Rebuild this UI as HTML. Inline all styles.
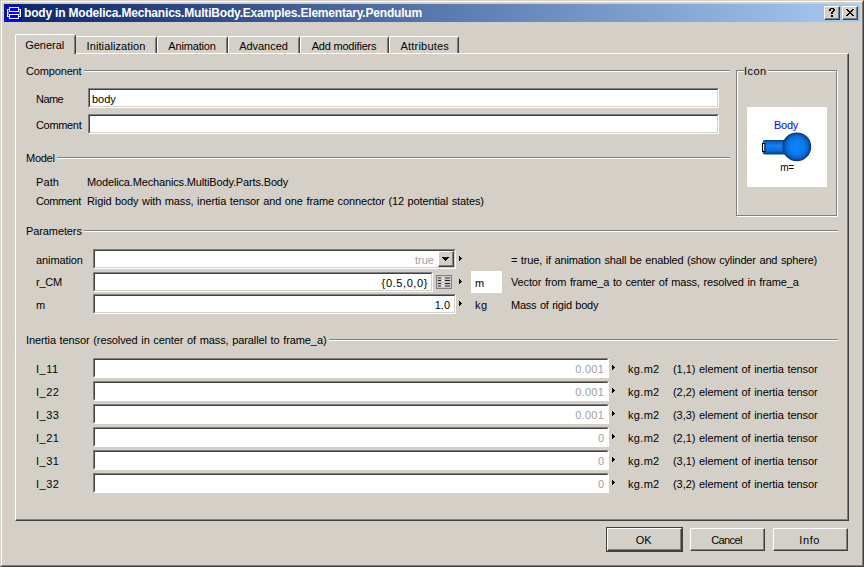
<!DOCTYPE html>
<html>
<head>
<meta charset="utf-8">
<title>body</title>
<style>
*{box-sizing:border-box;margin:0;padding:0}
html,body{width:864px;height:567px;overflow:hidden;background:#d4d0c8}
body{font-family:"Liberation Sans",sans-serif;font-size:11px;color:#000;position:relative}
.abs{position:absolute}
.t{position:absolute;white-space:nowrap;line-height:13px;height:13px}
#win{position:absolute;left:0;top:0;width:864px;height:567px;background:#d4d0c8;
 border-top:1px solid #d4d0c8;border-left:1px solid #d4d0c8;border-right:1px solid #404040;border-bottom:1px solid #404040}
#win2{position:absolute;left:1px;top:1px;width:862px;height:565px;
 border-top:1px solid #fff;border-left:1px solid #fff;border-right:1px solid #808080;border-bottom:1px solid #808080}
#title{position:absolute;left:4px;top:4px;width:856px;height:18px;background:linear-gradient(to right,#0a246a 0%,#a6caf0 100%)}
#ticon{position:absolute;left:6px;top:5px;width:16px;height:16px;background:#0000ff}
#ttext{position:absolute;left:24px;top:6px;color:#fff;font-weight:bold;font-size:12px;letter-spacing:-0.19px;line-height:14px;white-space:nowrap}
.tbtn{position:absolute;top:6px;width:16px;height:14px;background:#d4d0c8;
 border-top:1px solid #fff;border-left:1px solid #fff;border-right:1px solid #404040;border-bottom:1px solid #404040}
.tbtn i{position:absolute;left:0;top:0;width:14px;height:12px;border-right:1px solid #808080;border-bottom:1px solid #808080;display:block}
#pane{position:absolute;left:15px;top:53px;width:834px;height:468px;
 border-top:1px solid #fff;border-left:1px solid #fff;border-right:1px solid #404040;border-bottom:1px solid #404040}
#pane i{position:absolute;left:0;top:0;right:0;bottom:0;border-right:1px solid #808080;border-bottom:1px solid #808080;display:block}
.tab{position:absolute;top:36px;height:17px;background:#d4d0c8;
 border-top:1px solid #fff;border-left:1px solid #fff;border-right:1px solid #404040;border-radius:2px 2px 0 0}
.tab i{position:absolute;top:1px;bottom:0;right:0;width:1px;background:#808080;display:block}
.tab span{position:absolute;left:0;right:0;top:3px;text-align:center;line-height:13px;white-space:nowrap}
#tab0{top:34px;height:20px;left:15px;width:61px}
#tab0 span{top:4px}
.tab.nl{border-left:none;border-radius:0 2px 0 0}
.ed{position:absolute;background:#fff;border-top:1px solid #808080;border-left:1px solid #808080;border-right:1px solid #fff;border-bottom:1px solid #fff}
.ed i{position:absolute;left:0;top:0;right:0;bottom:0;border-top:1px solid #404040;border-left:1px solid #404040;border-right:1px solid #d4d0c8;border-bottom:1px solid #d4d0c8;display:block}
.ed.ro i{border-right-color:#fff;border-bottom-color:#fff}
.ed span{position:absolute;right:5px;top:4px;line-height:13px;white-space:nowrap}
.g{color:#a0a0a4}
.hl{position:absolute;height:2px;border-top:1px solid #808080;border-bottom:1px solid #fff}
.btn{position:absolute;height:23px;width:75px;background:#d4d0c8;
 border-top:1px solid #fff;border-left:1px solid #fff;border-right:1px solid #404040;border-bottom:1px solid #404040}
.btn i{position:absolute;left:0;top:0;right:0;bottom:0;border-right:1px solid #808080;border-bottom:1px solid #808080;display:block}
.btn span{position:absolute;left:0;right:0;top:5px;text-align:center;line-height:13px}
</style>
</head>
<body>
<div id="win"></div><div id="win2"></div>
<div id="title"></div>
<div id="ticon">
<svg width="16" height="16" viewBox="0 0 16 16" style="display:block" shape-rendering="crispEdges">
<g fill="#fff">
<rect x="3" y="2" width="10" height="1"/><rect x="3" y="6" width="10" height="1"/><rect x="3" y="2" width="1" height="5"/><rect x="12" y="2" width="1" height="5"/>
<rect x="3" y="9" width="10" height="1"/><rect x="3" y="13" width="10" height="1"/><rect x="3" y="9" width="1" height="5"/><rect x="12" y="9" width="1" height="5"/>
<rect x="1" y="4" width="1" height="8"/><rect x="14" y="4" width="1" height="8"/>
<rect x="1" y="4" width="3" height="1"/><rect x="12" y="4" width="3" height="1"/>
<rect x="1" y="11" width="3" height="1"/><rect x="12" y="11" width="3" height="1"/>
<rect x="2" y="6" width="1" height="4" opacity="0.45"/><rect x="13" y="6" width="1" height="4" opacity="0.45"/>
</g>
</svg>
</div>
<div id="ttext">body in Modelica.Mechanics.MultiBody.Examples.Elementary.Pendulum</div>

<div class="tbtn" style="left:824px"><i></i><svg class="abs" style="left:-1px;top:-1px" width="16" height="14" shape-rendering="crispEdges"><g fill="#000"><rect x="6" y="2" width="4" height="1"/><rect x="5" y="3" width="2" height="1"/><rect x="9" y="3" width="2" height="1"/><rect x="5" y="4" width="2" height="1"/><rect x="9" y="4" width="2" height="1"/><rect x="8" y="5" width="2" height="1"/><rect x="7" y="6" width="2" height="1"/><rect x="7" y="7" width="2" height="1"/><rect x="7" y="9" width="2" height="1"/><rect x="7" y="10" width="2" height="1"/></g></svg></div>
<div class="tbtn" style="left:842px"><i></i><svg class="abs" style="left:-1px;top:-1px" width="16" height="14" shape-rendering="crispEdges"><g fill="#000"><rect x="4" y="3" width="2" height="1"/><rect x="10" y="3" width="2" height="1"/><rect x="5" y="4" width="2" height="1"/><rect x="9" y="4" width="2" height="1"/><rect x="6" y="5" width="4" height="1"/><rect x="7" y="6" width="2" height="1"/><rect x="6" y="7" width="4" height="1"/><rect x="5" y="8" width="2" height="1"/><rect x="9" y="8" width="2" height="1"/><rect x="4" y="9" width="2" height="1"/><rect x="10" y="9" width="2" height="1"/></g></svg></div>
<div id="pane"><i></i></div>
<div class="tab" id="tab0"><i></i><span style="left:-0.8px;right:0.8px;letter-spacing:0.002px;">General</span></div>
<div class="tab nl" style="left:76px;width:81px"><i></i><span style="letter-spacing:0.108px;">Initialization</span></div>
<div class="tab" style="left:157px;width:71px"><i></i><span style="left:-0.5px;right:0.5px;letter-spacing:-0.158px;">Animation</span></div>
<div class="tab" style="left:228px;width:72px"><i></i><span style="left:-0.5px;right:0.5px;letter-spacing:-0.024px;">Advanced</span></div>
<div class="tab" style="left:300px;width:89px"><i></i><span style="left:-0.5px;right:0.5px;letter-spacing:-0.196px;">Add modifiers</span></div>
<div class="tab" style="left:389px;width:70px"><i></i><span style="left:0.8px;right:-0.8px;letter-spacing:0.208px;">Attributes</span></div>
<div class="t" style="left:26px;top:65px;letter-spacing:-0.156px;">Component</div>
<div class="hl" style="left:84px;top:70px;width:646px"></div>
<div class="t" style="left:36px;top:93px;letter-spacing:-0.535px;">Name</div>
<div class="ed" style="left:88px;top:88px;width:631px;height:20px"><i></i><span class="" style="left:3px;right:auto;">body</span></div>
<div class="t" style="left:36px;top:119px;letter-spacing:-0.331px;">Comment</div>
<div class="ed" style="left:88px;top:114px;width:631px;height:20px"><i></i></div>
<div class="t" style="left:26px;top:152px;letter-spacing:-0.283px;">Model</div>
<div class="hl" style="left:57px;top:157px;width:673px"></div>
<div class="t" style="left:36px;top:176px;letter-spacing:0.100px;">Path</div>
<div class="t" style="left:87px;top:176px;letter-spacing:-0.151px;">Modelica.Mechanics.MultiBody.Parts.Body</div>
<div class="t" style="left:36px;top:195px;letter-spacing:-0.405px;">Comment</div>
<div class="t" style="left:87px;top:195px;letter-spacing:-0.125px;word-spacing:0.700px;">Rigid body with mass, inertia tensor and one frame connector (12 potential states)</div>
<div class="abs" style="left:736px;top:70px;width:101px;height:146px;border:1px solid #808080;box-shadow:1px 1px 0 #fff, inset 1px 1px 0 #fff"></div>
<div class="abs" style="left:744px;top:70px;width:24px;height:2px;background:#d4d0c8"></div>
<div class="t" style="left:744px;top:65px;letter-spacing:0.479px;">Icon</div>
<div class="abs" style="left:747px;top:107px;width:80px;height:80px;background:#fff">
<svg width="80" height="80" viewBox="0 0 80 80" style="display:block">
<defs>
<radialGradient id="sg" cx="0.5" cy="0.5" r="0.5"><stop offset="0" stop-color="#0a84fc"/><stop offset="0.5" stop-color="#0b7cf0"/><stop offset="0.78" stop-color="#0a64cc"/><stop offset="0.92" stop-color="#08489a"/><stop offset="1" stop-color="#052c64"/></radialGradient>
<linearGradient id="cg" x1="0" y1="0" x2="0" y2="1"><stop offset="0" stop-color="#083c80"/><stop offset="0.15" stop-color="#0c62c4"/><stop offset="0.4" stop-color="#0e86f6"/><stop offset="0.7" stop-color="#0c70de"/><stop offset="1" stop-color="#083c80"/></linearGradient>
</defs>
<path d="M18 33h26v14.5h-26a2.3 2.3 0 0 1 -2.3 -2.3v-9.9a2.3 2.3 0 0 1 2.3 -2.3z" fill="url(#cg)"/>
<rect x="15.5" y="36.5" width="2.4" height="8" fill="#e0e0e0" stroke="#000" stroke-width="1"/>
<circle cx="49.8" cy="39.8" r="14.4" fill="url(#sg)"/>
</svg>
<div class="t" style="left:-1px;width:80px;text-align:center;top:12px;color:#0000ff;font-size:11px;letter-spacing:-0.25px">Body</div>
<div class="t" style="left:0;width:80px;text-align:center;top:54px;font-size:10px;letter-spacing:-0.3px">m=</div>
</div>
<div class="t" style="left:26px;top:225px;letter-spacing:-0.102px;">Parameters</div>
<div class="hl" style="left:84px;top:230px;width:754px"></div>
<div class="t" style="left:36px;top:254px;letter-spacing:-0.089px;">animation</div>
<div class="ed" style="left:93px;top:249px;width:363px;height:20px"><i></i><span class="g" style="right:21px">true</span>
<div class="abs" style="right:1px;top:1px;width:16px;height:16px;background:#d4d0c8;border-top:1px solid #fff;border-left:1px solid #fff;border-right:1px solid #404040;border-bottom:1px solid #404040"><div class="abs" style="left:0;top:0;right:0;bottom:0;border-right:1px solid #808080;border-bottom:1px solid #808080"></div>
<svg class="abs" style="left:3px;top:5px" width="7" height="4" shape-rendering="crispEdges"><path d="M0 0h7v1h-7zM1 1h5v1h-5zM2 2h3v1h-3zM3 3h1v1h-1z" fill="#000"/></svg></div>
</div>
<svg class="abs" style="left:459px;top:256px" width="3" height="5" shape-rendering="crispEdges"><path d="M0 0h1v5h-1zM1 1h1v3h-1zM2 2h1v1h-1z" fill="#000"/></svg>
<div class="t" style="left:511px;top:254px;letter-spacing:-0.156px;word-spacing:0.700px;">= true, if animation shall be enabled (show cylinder and sphere)</div>
<div class="t" style="left:36px;top:276px;letter-spacing:-0.266px;">r_CM</div>
<div class="ed" style="left:93px;top:272px;width:340px;height:20px"><i></i><span class="" style="letter-spacing:0.600px;right:4px;">{0.5,0,0}</span></div>
<div class="abs" style="left:436px;top:275px;width:16px;height:14px;background:#c8c8c8;border:1px solid #808080">
<svg width="14" height="12" style="display:block" shape-rendering="crispEdges">
<g fill="#f4f4f4"><rect x="5" y="1" width="2" height="2" fill="#e4e4e4"/><rect x="5" y="4" width="2" height="1"/><rect x="5" y="7" width="2" height="1"/><rect x="5" y="9" width="2" height="2" fill="#e4e4e4"/></g>
<g fill="#808080"><rect x="1" y="1" width="3" height="2"/><rect x="8" y="1" width="5" height="2"/><rect x="1" y="9" width="3" height="2"/><rect x="8" y="9" width="5" height="2"/></g>
<g fill="#202020"><rect x="1" y="4" width="3" height="1"/><rect x="8" y="4" width="5" height="1"/><rect x="1" y="7" width="3" height="1"/><rect x="8" y="7" width="5" height="1"/></g>
</svg></div>
<svg class="abs" style="left:459px;top:279px" width="3" height="5" shape-rendering="crispEdges"><path d="M0 0h1v5h-1zM1 1h1v3h-1zM2 2h1v1h-1z" fill="#000"/></svg>
<div class="abs" style="left:471px;top:271px;width:31px;height:22px;background:#fff"></div>
<div class="t" style="left:475px;top:277px;">m</div>
<div class="t" style="left:511px;top:276px;letter-spacing:-0.146px;word-spacing:0.700px;">Vector from frame_a to center of mass, resolved in frame_a</div>
<div class="t" style="left:36px;top:299px;">m</div>
<div class="ed" style="left:93px;top:294px;width:363px;height:20px"><i></i><span class="" style="letter-spacing:-0.027px;right:5px;">1.0</span></div>
<svg class="abs" style="left:459px;top:301px" width="3" height="5" shape-rendering="crispEdges"><path d="M0 0h1v5h-1zM1 1h1v3h-1zM2 2h1v1h-1z" fill="#000"/></svg>
<div class="t" style="left:475px;top:299px;letter-spacing:0.600px;">kg</div>
<div class="t" style="left:511px;top:299px;letter-spacing:-0.228px;word-spacing:0.700px;">Mass of rigid body</div>
<div class="t" style="left:26px;top:334px;letter-spacing:-0.094px;word-spacing:0.700px;">Inertia tensor (resolved in center of mass, parallel to frame_a)</div>
<div class="hl" style="left:329px;top:339px;width:509px"></div>
<div class="t" style="left:36px;top:363px;letter-spacing:0.500px;">I_11</div>
<div class="ed ro" style="left:93px;top:358px;width:516px;height:20px"><i></i><span class="g" style="letter-spacing:0.250px;right:4px;">0.001</span></div>
<svg class="abs" style="left:612px;top:365px" width="3" height="5" shape-rendering="crispEdges"><path d="M0 0h1v5h-1zM1 1h1v3h-1zM2 2h1v1h-1z" fill="#000"/></svg>
<div class="t" style="left:628px;top:363px;letter-spacing:0.318px;">kg.m2</div>
<div class="t" style="left:673px;top:363px;letter-spacing:-0.059px;word-spacing:0.700px;">(1,1) element of inertia tensor</div>
<div class="t" style="left:36px;top:386px;letter-spacing:0.500px;">I_22</div>
<div class="ed ro" style="left:93px;top:381px;width:516px;height:20px"><i></i><span class="g" style="letter-spacing:0.250px;right:4px;">0.001</span></div>
<svg class="abs" style="left:612px;top:388px" width="3" height="5" shape-rendering="crispEdges"><path d="M0 0h1v5h-1zM1 1h1v3h-1zM2 2h1v1h-1z" fill="#000"/></svg>
<div class="t" style="left:628px;top:386px;letter-spacing:0.318px;">kg.m2</div>
<div class="t" style="left:673px;top:386px;letter-spacing:-0.059px;word-spacing:0.700px;">(2,2) element of inertia tensor</div>
<div class="t" style="left:36px;top:409px;letter-spacing:0.500px;">I_33</div>
<div class="ed ro" style="left:93px;top:404px;width:516px;height:20px"><i></i><span class="g" style="letter-spacing:0.250px;right:4px;">0.001</span></div>
<svg class="abs" style="left:612px;top:411px" width="3" height="5" shape-rendering="crispEdges"><path d="M0 0h1v5h-1zM1 1h1v3h-1zM2 2h1v1h-1z" fill="#000"/></svg>
<div class="t" style="left:628px;top:409px;letter-spacing:0.318px;">kg.m2</div>
<div class="t" style="left:673px;top:409px;letter-spacing:-0.059px;word-spacing:0.700px;">(3,3) element of inertia tensor</div>
<div class="t" style="left:36px;top:432px;letter-spacing:0.500px;">I_21</div>
<div class="ed ro" style="left:93px;top:427px;width:516px;height:20px"><i></i><span class="g" style="right:4px;">0</span></div>
<svg class="abs" style="left:612px;top:434px" width="3" height="5" shape-rendering="crispEdges"><path d="M0 0h1v5h-1zM1 1h1v3h-1zM2 2h1v1h-1z" fill="#000"/></svg>
<div class="t" style="left:628px;top:432px;letter-spacing:0.318px;">kg.m2</div>
<div class="t" style="left:673px;top:432px;letter-spacing:-0.059px;word-spacing:0.700px;">(2,1) element of inertia tensor</div>
<div class="t" style="left:36px;top:455px;letter-spacing:0.500px;">I_31</div>
<div class="ed ro" style="left:93px;top:450px;width:516px;height:20px"><i></i><span class="g" style="right:4px;">0</span></div>
<svg class="abs" style="left:612px;top:457px" width="3" height="5" shape-rendering="crispEdges"><path d="M0 0h1v5h-1zM1 1h1v3h-1zM2 2h1v1h-1z" fill="#000"/></svg>
<div class="t" style="left:628px;top:455px;letter-spacing:0.318px;">kg.m2</div>
<div class="t" style="left:673px;top:455px;letter-spacing:-0.059px;word-spacing:0.700px;">(3,1) element of inertia tensor</div>
<div class="t" style="left:36px;top:478px;letter-spacing:0.500px;">I_32</div>
<div class="ed ro" style="left:93px;top:473px;width:516px;height:20px"><i></i><span class="g" style="right:4px;">0</span></div>
<svg class="abs" style="left:612px;top:480px" width="3" height="5" shape-rendering="crispEdges"><path d="M0 0h1v5h-1zM1 1h1v3h-1zM2 2h1v1h-1z" fill="#000"/></svg>
<div class="t" style="left:628px;top:478px;letter-spacing:0.318px;">kg.m2</div>
<div class="t" style="left:673px;top:478px;letter-spacing:-0.059px;word-spacing:0.700px;">(3,2) element of inertia tensor</div>
<div class="abs" style="left:606px;top:527px;width:77px;height:25px;border:1px solid #404040"></div>
<div class="btn" style="left:607px;top:528px"><i></i><span style="left:-0.8px;right:0.8px;">OK</span></div>
<div class="btn" style="left:690px;top:528px"><i></i><span style="left:-1px;right:1px;letter-spacing:-0.600px;">Cancel</span></div>
<div class="btn" style="left:773px;top:528px"><i></i><span style="left:-0.8px;right:0.8px;letter-spacing:0.600px;">Info</span></div>
</body>
</html>
